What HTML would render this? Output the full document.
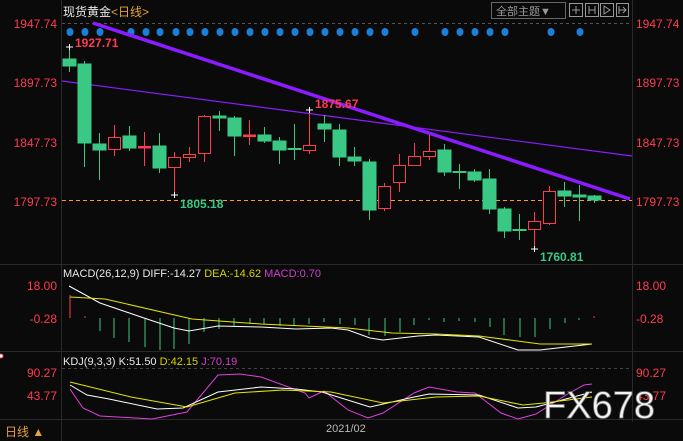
<!DOCTYPE html>
<html><head><meta charset="utf-8"><style>
html,body{margin:0;padding:0;background:#0a0a0a;width:683px;height:441px;overflow:hidden}
svg{display:block}
text{font-family:"Liberation Sans","Noto Sans CJK SC",sans-serif}
</style></head><body>
<svg width="683" height="441" viewBox="0 0 683 441" xmlns="http://www.w3.org/2000/svg">
<rect width="683" height="441" fill="#0a0a0a"/>
<g stroke="#2a2a2a" stroke-width="1">
<line x1="61.5" y1="0" x2="61.5" y2="441"/>
<line x1="632.5" y1="0" x2="632.5" y2="422"/>
<line x1="0" y1="264.5" x2="683" y2="264.5"/>
<line x1="0" y1="351.5" x2="683" y2="351.5"/>
<line x1="0" y1="419.5" x2="683" y2="419.5"/>
</g>
<line x1="62" y1="23.5" x2="632" y2="23.5" stroke="#555" stroke-dasharray="3,3"/>
<line x1="62" y1="368.5" x2="632" y2="368.5" stroke="#444" stroke-dasharray="3,3"/>
<text x="63" y="16" font-size="12" fill="#e8e8e8">现货黄金<tspan fill="#e6a23c">&lt;日线&gt;</tspan></text>
<rect x="491.5" y="2.5" width="74" height="16" fill="none" stroke="#666"/>
<text x="496" y="15" font-size="11" fill="#999">全部主题▼</text>
<g fill="none" stroke="#999">
<rect x="569.5" y="3.5" width="13" height="13"/><rect x="585.5" y="3.5" width="13" height="13"/>
<rect x="600.5" y="3.5" width="13" height="13"/><rect x="616.5" y="3.5" width="12" height="13"/>
<path d="M576 6v8M572 10h8M589 6v8M595 6v8M589 10h6M604 6v8l6-4z M619 6v8M619 10h7M623 7l3 3-3 3"/>
</g>
<g font-size="12" fill="#ff3b50">
<text x="57" y="28" text-anchor="end">1947.74</text>
<text x="57" y="87" text-anchor="end">1897.73</text>
<text x="57" y="147" text-anchor="end">1847.73</text>
<text x="57" y="206" text-anchor="end">1797.73</text>
<text x="636" y="28">1947.74</text>
<text x="636" y="87">1897.73</text>
<text x="636" y="147">1847.73</text>
<text x="636" y="206">1797.73</text>
<text x="57" y="290" text-anchor="end">18.00</text>
<text x="57" y="323" text-anchor="end">-0.28</text>
<text x="636" y="290">18.00</text>
<text x="636" y="323">-0.28</text>
<text x="57" y="377" text-anchor="end">90.27</text>
<text x="57" y="400" text-anchor="end">43.77</text>
<text x="636" y="377">90.27</text>
<text x="636" y="400">43.77</text>
</g>
<g fill="#1a7fd8">
<ellipse cx="70" cy="32" rx="3.5" ry="4"/><ellipse cx="85" cy="32" rx="3.5" ry="4"/><ellipse cx="100" cy="32" rx="3.5" ry="4"/>
<ellipse cx="131" cy="32" rx="3.5" ry="4"/><ellipse cx="146" cy="32" rx="3.5" ry="4"/><ellipse cx="160" cy="32" rx="3.5" ry="4"/>
<ellipse cx="176" cy="32" rx="3.5" ry="4"/><ellipse cx="190" cy="32" rx="3.5" ry="4"/><ellipse cx="205" cy="32" rx="3.5" ry="4"/>
<ellipse cx="220" cy="32" rx="3.5" ry="4"/><ellipse cx="235" cy="32" rx="3.5" ry="4"/><ellipse cx="250" cy="32" rx="3.5" ry="4"/>
<ellipse cx="265" cy="32" rx="3.5" ry="4"/><ellipse cx="280" cy="32" rx="3.5" ry="4"/><ellipse cx="295" cy="32" rx="3.5" ry="4"/>
<ellipse cx="310" cy="32" rx="3.5" ry="4"/><ellipse cx="325" cy="32" rx="3.5" ry="4"/><ellipse cx="340" cy="32" rx="3.5" ry="4"/>
<ellipse cx="355" cy="32" rx="3.5" ry="4"/><ellipse cx="370" cy="32" rx="3.5" ry="4"/><ellipse cx="385" cy="32" rx="3.5" ry="4"/>
<ellipse cx="415" cy="32" rx="3.5" ry="4"/><ellipse cx="445" cy="32" rx="3.5" ry="4"/><ellipse cx="460" cy="32" rx="3.5" ry="4"/>
<ellipse cx="475" cy="32" rx="3.5" ry="4"/><ellipse cx="490" cy="32" rx="3.5" ry="4"/><ellipse cx="505" cy="32" rx="3.5" ry="4"/>
<ellipse cx="551" cy="32" rx="3.5" ry="4"/><ellipse cx="580" cy="32" rx="3.5" ry="4"/>
</g>
<line x1="62" y1="81" x2="632" y2="156" stroke="#8a1cff" stroke-width="1.2"/>
<line x1="62" y1="200.5" x2="632" y2="200.5" stroke="#ff9a2e" stroke-dasharray="4,3"/>
<g stroke-width="1">
<g fill="#3ac985" stroke="#3ac985">
<line x1="69.5" y1="46" x2="69.5" y2="72"/><rect x="63" y="59" width="13" height="7"/>
<line x1="84.5" y1="61" x2="84.5" y2="167"/><rect x="78" y="64" width="13" height="79"/>
<line x1="99.5" y1="133" x2="99.5" y2="180"/><rect x="93" y="144" width="13" height="6"/>
<line x1="129.5" y1="126" x2="129.5" y2="151"/><rect x="123" y="136" width="13" height="12"/>
<line x1="159.5" y1="133" x2="159.5" y2="173"/><rect x="153" y="146" width="13" height="22"/>
<line x1="219.5" y1="111" x2="219.5" y2="131"/><rect x="213" y="116" width="13" height="2"/>
<line x1="234.5" y1="116" x2="234.5" y2="156"/><rect x="228" y="118" width="13" height="18"/>
<line x1="264.5" y1="127" x2="264.5" y2="143"/><rect x="258" y="135" width="13" height="6"/>
<line x1="279.5" y1="137" x2="279.5" y2="164"/><rect x="273" y="141" width="13" height="9"/>
<line x1="294.5" y1="124" x2="294.5" y2="160"/><rect x="288" y="148.5" width="13" height="1"/>
<line x1="324.5" y1="115" x2="324.5" y2="142"/><rect x="318" y="124" width="13" height="5"/>
<line x1="339.5" y1="124" x2="339.5" y2="166"/><rect x="333" y="130" width="13" height="27"/>
<line x1="354.5" y1="147" x2="354.5" y2="166"/><rect x="348" y="157" width="13" height="4"/>
<line x1="369.5" y1="159" x2="369.5" y2="220"/><rect x="363" y="162" width="13" height="48"/>
<line x1="444.5" y1="144" x2="444.5" y2="176"/><rect x="438" y="150" width="13" height="22"/>
<line x1="459.5" y1="164" x2="459.5" y2="189"/><rect x="453" y="171.5" width="13" height="1"/>
<line x1="474.5" y1="169" x2="474.5" y2="182"/><rect x="468" y="172" width="13" height="8"/>
<line x1="489.5" y1="169" x2="489.5" y2="214"/><rect x="483" y="179" width="13" height="30"/>
<line x1="504.5" y1="207" x2="504.5" y2="238"/><rect x="498" y="209" width="13" height="22"/>
<line x1="519.5" y1="214" x2="519.5" y2="240"/><rect x="513" y="229.5" width="13" height="1"/>
<line x1="564.5" y1="182" x2="564.5" y2="207"/><rect x="558" y="191" width="13" height="5"/>
<line x1="579.5" y1="185" x2="579.5" y2="221"/><rect x="573" y="195" width="13" height="2"/>
<line x1="594.5" y1="195" x2="594.5" y2="203"/><rect x="588" y="196" width="13" height="4"/>
</g>
<g fill="#0a0a0a" stroke="#ff3b50">
<line x1="114.5" y1="125" x2="114.5" y2="156"/><rect x="108.5" y="137.5" width="12" height="12"/>
<line x1="144.5" y1="132" x2="144.5" y2="166"/><rect x="138.5" y="146.5" width="12" height="1.5" fill="#ff3b50"/>
<line x1="174.5" y1="152" x2="174.5" y2="195"/><rect x="168.5" y="157.5" width="12" height="10"/>
<line x1="189.5" y1="147" x2="189.5" y2="162"/><rect x="183.5" y="154.5" width="12" height="3"/>
<line x1="204.5" y1="115" x2="204.5" y2="162"/><rect x="198.5" y="116.5" width="12" height="37"/>
<line x1="249.5" y1="120" x2="249.5" y2="145"/><rect x="243.5" y="135" width="12" height="1.5" fill="#ff3b50"/>
<line x1="309.5" y1="110" x2="309.5" y2="154"/><rect x="303.5" y="145.5" width="12" height="5"/>
<line x1="384.5" y1="183" x2="384.5" y2="211"/><rect x="378.5" y="186.5" width="12" height="22"/>
<line x1="399.5" y1="154" x2="399.5" y2="192"/><rect x="393.5" y="165.5" width="12" height="17"/>
<line x1="414.5" y1="143" x2="414.5" y2="166"/><rect x="408.5" y="156.5" width="12" height="9"/>
<line x1="429.5" y1="133" x2="429.5" y2="160"/><rect x="423.5" y="151.5" width="12" height="5"/>
<line x1="534.5" y1="212" x2="534.5" y2="249"/><rect x="528.5" y="221.5" width="12" height="8"/>
<line x1="549.5" y1="186" x2="549.5" y2="225"/><rect x="543.5" y="191.5" width="12" height="32"/>
</g>
</g>
<line x1="93" y1="23" x2="630" y2="199" stroke="#8a1cff" stroke-width="3.5"/>
<g stroke="#fff"><path d="M66 47h7M69.5 44v6M171 195h7M174.5 192v6M306 110h7M309.5 107v6M531 249h7M534.5 246v6"/></g>
<g font-size="12" font-weight="bold">
<text x="75" y="47" fill="#ff3b50">1927.71</text>
<text x="315" y="108" fill="#ff3b50">1875.67</text>
<text x="180" y="208" fill="#3ac985">1805.18</text>
<text x="540" y="261" fill="#3ac985">1760.81</text>
</g>
<text x="63" y="277" font-size="11" fill="#e8e8e8">MACD(26,12,9) DIFF:-14.27 <tspan fill="#d4d400">DEA:-14.62</tspan> <tspan fill="#d03ed0">MACD:0.70</tspan></text>
<g stroke="#3ac985">
<path d="M100 318V331M114 318V338M129 318V342M145 318V347M160 318V350M174 318V349M189 318V344M204 318V332M219 318V329M234 318V326M250 318V324M264 318V324M280 318V326M294 318V326M309 318V324M324 318V322M340 318V324M355 318V325M369 318V335M385 318V336M400 318V332M414 318V325M429 318V320M444 318V322M459 318V321M475 318V322M490 318V327M504 318V335M520 318V337M535 318V337M550 318V329M565 318V323M579 318V320"/>
</g>
<g stroke="#ff3b50"><path d="M70 318V295M85 318V316M594 318V316"/></g>
<polyline fill="none" stroke="#fff" points="69,286 100,303 144,318 174,328 189,331 218,326 261,327 296,329 331,328 348,330 370,338 383,340 418,336 436,335 479,337 518,350 540,350 592,344"/>
<polyline fill="none" stroke="#e6e600" points="70,297 105,299 192,319 261,324 348,328 392,333 436,334 479,336 540,344 592,344"/>
<text x="63" y="365" font-size="11" fill="#e8e8e8">KDJ(9,3,3) K:51.50 <tspan fill="#d4d400">D:42.15</tspan> <tspan fill="#d03ed0">J:70.19</tspan></text>
<polyline fill="none" stroke="#e040e0" points="70,389 83,408 100,416 152,419 187,412 218,375 240,374 261,377 305,393 309,398 324,391 348,410 368,418 383,413 414,393 429,387 457,392 475,393 501,413 518,419 536,414 566,395 584,385 592,384"/>
<polyline fill="none" stroke="#fff" points="70,385 87,395 109,399 157,409 183,408 218,392 261,387 296,389 322,392 370,407 414,397 429,394 479,395 518,408 536,407 592,392"/>
<polyline fill="none" stroke="#e6e600" points="70,382 131,397 187,407 235,393 283,390 331,392 383,403 436,397 479,396 523,405 544,403 592,397"/>
<text x="543" y="418" font-size="38" fill="#f4f4f4" stroke="#777" stroke-width="0.8" textLength="112" lengthAdjust="spacingAndGlyphs">FX678</text>
<text x="5" y="436" font-size="12" fill="#e6a23c">日线 ▲</text>
<text x="326" y="432" font-size="11" fill="#bbb">2021/02</text>
<circle cx="1" cy="356" r="2" fill="#fff" stroke="#ff3b50"/>
</svg>
</body></html>
